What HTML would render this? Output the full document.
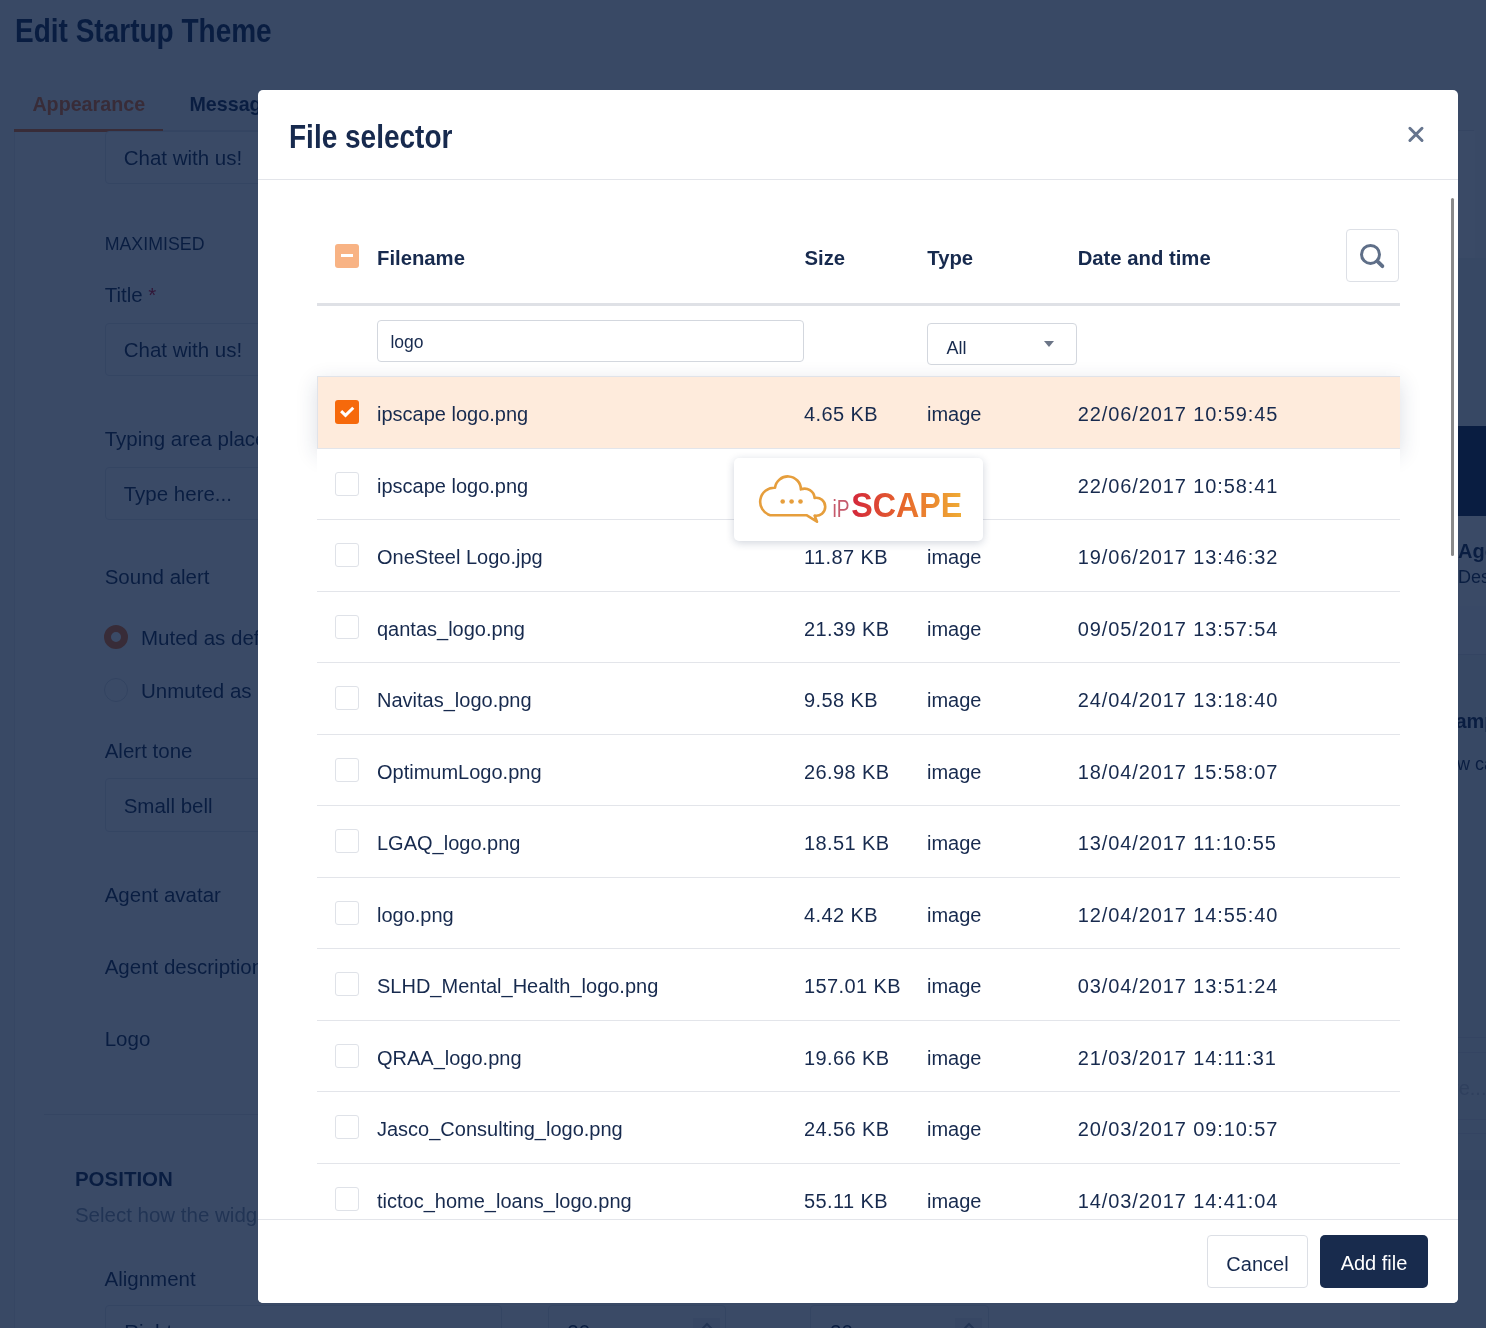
<!DOCTYPE html>
<html>
<head>
<meta charset="utf-8">
<style>
html,body{margin:0;padding:0;}
body{width:1486px;height:1328px;overflow:hidden;position:relative;background:#fff;font-family:"Liberation Sans",sans-serif;color:#0d2147;}
.a{position:absolute;white-space:nowrap;line-height:1;}
#bgpage{will-change:transform;position:absolute;left:0;top:0;width:1486px;height:1328px;background:#f7f8fa;overflow:hidden;}
#overlay{position:absolute;left:0;top:0;width:1486px;height:1328px;background:rgba(9,29,64,0.8);}
#modal{will-change:transform;position:absolute;left:258px;top:90px;width:1200px;height:1213px;background:#fff;border-radius:5px;overflow:hidden;color:#172a4e;}

#body{position:absolute;left:0;top:90px;width:1200px;height:1039px;top:0;}
.cbh{position:absolute;left:77px;top:154px;width:24px;height:24px;background:#f8b384;border-radius:3px;}
.hd{top:157.6px;font-size:20.3px;font-weight:bold;}
.row{position:absolute;left:59px;width:1083px;height:71.5px;box-sizing:border-box;border-bottom:1px solid #e3e5ea;background:#fff;}
.row.sel{background:#feebdc;box-shadow:inset 1px 1px 0 #e0e3e9,0 6px 20px rgba(30,50,90,0.16);}
.cb{position:absolute;left:18px;top:23px;width:22px;height:22px;border:1px solid #dfe2e8;border-radius:3px;background:#fff;}
.cb.on{top:24px;width:24px;height:24px;border:0;background:#f6690b;}
.cb svg{position:absolute;left:0;top:0}
.t{position:absolute;top:27.1px;font-size:20px;line-height:1;white-space:nowrap;}
.sel .t{top:27.8px}.c1{left:60px}.c2{left:487px;letter-spacing:0.4px}.c3{left:610px}.c4{left:760.7px;letter-spacing:0.9px}
#tip{position:absolute;left:476px;top:368px;width:249px;height:83px;background:#fff;border-radius:5px;box-shadow:0 2px 9px rgba(20,40,80,0.2);z-index:5;}
#foot{position:absolute;left:0;top:1129px;width:1200px;height:84px;background:#fff;z-index:10;}
.btn{top:16px;height:51px;border-radius:4px;font-size:20px;line-height:56px;text-align:center;}
</style>
</head>
<body>
<div id="bgpage">
<div class="a" style="left:14px;top:131px;width:1460px;height:1300px;background:#fff;border-left:1px solid #e9ebef"></div>
<div class="a" style="left:15px;top:19px;font-size:28px;font-weight:bold;transform:scaleY(1.17);transform-origin:0 23.7px">Edit Startup Theme</div>
<div class="a" style="left:14px;top:130px;width:1460px;height:1px;background:#e3e6eb"></div>
<div class="a" style="left:32.4px;top:95.32px;font-size:19.7px;font-weight:bold;color:#f26b1d">Appearance</div>
<div class="a" style="left:189.4px;top:95.32px;font-size:19.7px;font-weight:bold">Messages</div>
<div class="a" style="left:14px;top:129px;width:149px;height:3px;background:#f26b1d"></div>
<div class="a" style="left:104.5px;top:131px;width:600px;height:53px;box-sizing:border-box;border:1px solid #dfe3ea;border-radius:4px;"></div>
<div class="a" style="left:123.7px;top:147.85px;font-size:20.5px;">Chat with us!</div>
<div class="a" style="left:104.7px;top:235.73px;font-size:17.8px;">MAXIMISED</div>
<div class="a" style="left:104.7px;top:285.35px;font-size:20.5px;">Title <span style="color:#d0021b">*</span></div>
<div class="a" style="left:104.5px;top:322.8px;width:600px;height:53px;box-sizing:border-box;border:1px solid #dfe3ea;border-radius:4px;"></div>
<div class="a" style="left:123.7px;top:339.65px;font-size:20.5px;">Chat with us!</div>
<div class="a" style="left:104.7px;top:429.45px;font-size:20.5px;">Typing area placeholder</div>
<div class="a" style="left:104.5px;top:466.7px;width:600px;height:53px;box-sizing:border-box;border:1px solid #dfe3ea;border-radius:4px;"></div>
<div class="a" style="left:123.7px;top:483.85px;font-size:20.5px;">Type here...</div>
<div class="a" style="left:104.7px;top:567.45px;font-size:20.5px;">Sound alert</div>
<div class="a" style="left:104px;top:625px;width:24px;height:24px;box-sizing:border-box;border-radius:50%;border:7px solid #f26b1d;background:#fff"></div>
<div class="a" style="left:141px;top:628.45px;font-size:20.5px;">Muted as default</div>
<div class="a" style="left:104px;top:678px;width:24px;height:24px;box-sizing:border-box;border-radius:50%;border:1px solid #d6dae1;background:#fff"></div>
<div class="a" style="left:141px;top:680.65px;font-size:20.5px;">Unmuted as default</div>
<div class="a" style="left:104.7px;top:741.35px;font-size:20.5px;">Alert tone</div>
<div class="a" style="left:104.5px;top:778px;width:600px;height:54px;box-sizing:border-box;border:1px solid #dfe3ea;border-radius:4px;"></div>
<div class="a" style="left:123.7px;top:795.55px;font-size:20.5px;">Small bell</div>
<div class="a" style="left:104.7px;top:885.15px;font-size:20.5px;">Agent avatar</div>
<div class="a" style="left:104.7px;top:957.25px;font-size:20.5px;">Agent description</div>
<div class="a" style="left:104.7px;top:1029.15px;font-size:20.5px;">Logo</div>
<div class="a" style="left:44px;top:1114px;width:1400px;height:1px;background:#e3e6eb"></div>
<div class="a" style="left:74.9px;top:1168.55px;font-size:20.5px;font-weight:bold">POSITION</div>
<div class="a" style="left:74.9px;top:1205.25px;font-size:20.5px;color:#8390a6">Select how the widget appears on the page</div>
<div class="a" style="left:104.5px;top:1269.15px;font-size:20.5px;">Alignment</div>
<div class="a" style="left:104.5px;top:1305px;width:397px;height:52px;box-sizing:border-box;border:1px solid #dfe3ea;border-radius:4px;"></div>
<div class="a" style="left:547.6px;top:1305px;width:178.4px;height:52px;box-sizing:border-box;border:1px solid #dfe3ea;border-radius:4px;"></div>
<div class="a" style="left:693px;top:1318px;width:27px;height:22px;background:#eef0f4"></div>
<div class="a" style="left:810px;top:1305px;width:178.5px;height:52px;box-sizing:border-box;border:1px solid #dfe3ea;border-radius:4px;"></div>
<div class="a" style="left:955px;top:1318px;width:27px;height:22px;background:#eef0f4"></div>
<div class="a" style="left:124.3px;top:1321.8px;font-size:20.5px">Right</div><div class="a" style="left:567.3px;top:1321.8px;font-size:20.5px">20</div><div class="a" style="left:830px;top:1321.8px;font-size:20.5px">20</div><svg class="a" style="left:699px;top:1322px" width="16" height="10"><path d="M2 8 L8 2 L14 8" stroke="#8a94a6" stroke-width="2" fill="none"/></svg><svg class="a" style="left:961px;top:1322px" width="16" height="10"><path d="M2 8 L8 2 L14 8" stroke="#8a94a6" stroke-width="2" fill="none"/></svg>
<div class="a" style="left:1400px;top:258px;width:86px;height:1070px;background:#f1f2f5"></div>
<div class="a" style="left:1400px;top:426px;width:86px;height:90px;background:#0d2147"></div>
<div class="a" style="left:1400px;top:516px;width:86px;height:138px;background:#fff"></div>
<div class="a" style="left:1400px;top:606px;width:86px;height:48px;background:#fbfbfc"></div>
<div class="a" style="left:1400px;top:654px;width:86px;height:1px;background:#dfe2e8"></div>
<div class="a" style="left:1458px;top:540.67px;font-size:20px;font-weight:bold">Agent name</div>
<div class="a" style="left:1458px;top:567.76px;font-size:18px;">Description</div>
<div class="a" style="left:1431px;top:711.07px;font-size:20px;font-weight:bold">Example</div>
<div class="a" style="left:1434px;top:754.76px;font-size:18px;">How can we help?</div>
<div class="a" style="left:1400px;top:1037px;width:86px;height:1px;background:#dfe2e8"></div>
<div class="a" style="left:1400px;top:1052px;width:86px;height:1px;background:#dfe2e8"></div>
<div class="a" style="left:1452px;top:1078.07px;font-size:20px;color:#c5cad3">re...</div>
<div class="a" style="left:1400px;top:1119px;width:86px;height:1px;background:#dfe2e8"></div>
<div class="a" style="left:1400px;top:1133px;width:86px;height:1px;background:#dfe2e8"></div>
<div class="a" style="left:1400px;top:1170px;width:86px;height:30px;background:#e2e5ea"></div>
</div>
<div id="overlay"></div>
<div id="modal">
<div class="a" style="left:31px;top:34.9px;font-size:28px;font-weight:bold;transform:scaleY(1.2);transform-origin:0 23.7px">File selector</div>
<svg class="a" style="left:1140px;top:30px" width="36" height="30" viewBox="0 0 36 30"><path d="M11.9 8.3 L24 20.5 M24 8.3 L11.9 20.5" stroke="#66758e" stroke-width="3" stroke-linecap="round" fill="none"/></svg>
<div class="a" style="left:0;top:89px;width:1200px;height:1px;background:#e3e5ea"></div>
<div id="body">
<div class="cbh"><div style="position:absolute;left:6px;top:10.3px;width:12px;height:3.2px;background:#fff"></div></div>
<div class="a hd" style="left:119px">Filename</div>
<div class="a hd" style="left:546.5px">Size</div>
<div class="a hd" style="left:669.3px">Type</div>
<div class="a hd" style="left:819.7px">Date and time</div>
<div class="a" style="left:1088.2px;top:139.4px;width:51px;height:51px;border:1px solid #dde0e6;border-radius:4px;">
<svg width="51" height="51" viewBox="0 0 51 51" style="position:absolute;left:-1px;top:-1px"><circle cx="24.5" cy="25.4" r="9" stroke="#5f6f88" stroke-width="3" fill="none"/><path d="M31.3 32.2 L36.4 37.2" stroke="#5f6f88" stroke-width="3.8" stroke-linecap="round"/></svg>
</div>
<div class="a" style="left:59px;top:213px;width:1083px;height:3px;background:#dfe1e6"></div>
<div class="a" style="left:119px;top:230px;width:425px;height:40px;border:1px solid #d3d7de;border-radius:4px;"></div>
<div class="a" style="left:132.4px;top:244.2px;font-size:17.5px;">logo</div>
<div class="a" style="left:669px;top:233px;width:148px;height:40px;border:1px solid #d3d7de;border-radius:4px;"></div>
<div class="a" style="left:688.5px;top:248.8px;font-size:18px;">All</div>
<svg class="a" style="left:786px;top:251px" width="10" height="6" viewBox="0 0 10 6"><path d="M0 0 L10 0 L5 6 Z" fill="#6b7587"/></svg>
<div class="row sel" style="top:286px;height:72.5px"><div class="cb on"><svg width="24" height="24" viewBox="0 0 24 24"><path d="M7.2 12.2 L10.5 15.4 L17.2 8.8" fill="none" stroke="#fff" stroke-width="3" stroke-linecap="square"/></svg></div><div class="t c1">ipscape logo.png</div><div class="t c2">4.65 KB</div><div class="t c3">image</div><div class="t c4">22/06/2017 10:59:45</div></div>
<div class="row" style="top:358.5px"><div class="cb"></div><div class="t c1">ipscape logo.png</div><div class="t c2">4.65 KB</div><div class="t c3">image</div><div class="t c4">22/06/2017 10:58:41</div></div>
<div class="row" style="top:430.0px"><div class="cb"></div><div class="t c1">OneSteel Logo.jpg</div><div class="t c2">11.87 KB</div><div class="t c3">image</div><div class="t c4">19/06/2017 13:46:32</div></div>
<div class="row" style="top:501.5px"><div class="cb"></div><div class="t c1">qantas_logo.png</div><div class="t c2">21.39 KB</div><div class="t c3">image</div><div class="t c4">09/05/2017 13:57:54</div></div>
<div class="row" style="top:573.0px"><div class="cb"></div><div class="t c1">Navitas_logo.png</div><div class="t c2">9.58 KB</div><div class="t c3">image</div><div class="t c4">24/04/2017 13:18:40</div></div>
<div class="row" style="top:644.5px"><div class="cb"></div><div class="t c1">OptimumLogo.png</div><div class="t c2">26.98 KB</div><div class="t c3">image</div><div class="t c4">18/04/2017 15:58:07</div></div>
<div class="row" style="top:716.0px"><div class="cb"></div><div class="t c1">LGAQ_logo.png</div><div class="t c2">18.51 KB</div><div class="t c3">image</div><div class="t c4">13/04/2017 11:10:55</div></div>
<div class="row" style="top:787.5px"><div class="cb"></div><div class="t c1">logo.png</div><div class="t c2">4.42 KB</div><div class="t c3">image</div><div class="t c4">12/04/2017 14:55:40</div></div>
<div class="row" style="top:859.0px"><div class="cb"></div><div class="t c1">SLHD_Mental_Health_logo.png</div><div class="t c2">157.01 KB</div><div class="t c3">image</div><div class="t c4">03/04/2017 13:51:24</div></div>
<div class="row" style="top:930.5px"><div class="cb"></div><div class="t c1">QRAA_logo.png</div><div class="t c2">19.66 KB</div><div class="t c3">image</div><div class="t c4">21/03/2017 14:11:31</div></div>
<div class="row" style="top:1002.0px"><div class="cb"></div><div class="t c1">Jasco_Consulting_logo.png</div><div class="t c2">24.56 KB</div><div class="t c3">image</div><div class="t c4">20/03/2017 09:10:57</div></div>
<div class="row" style="top:1073.5px"><div class="cb"></div><div class="t c1">tictoc_home_loans_logo.png</div><div class="t c2">55.11 KB</div><div class="t c3">image</div><div class="t c4">14/03/2017 14:41:04</div></div>
<div class="a" style="left:1193px;top:108px;width:3px;height:357.5px;background:#8a8a8a;border-radius:2px"></div>
<div id="tip"><svg width="249" height="83" viewBox="0 0 249 83" style="position:absolute;left:0;top:0">
<defs><linearGradient id="g1" x1="117" y1="0" x2="228" y2="0" gradientUnits="userSpaceOnUse"><stop offset="0" stop-color="#d3253b"/><stop offset="0.5" stop-color="#e86c2c"/><stop offset="1" stop-color="#efac35"/></linearGradient></defs>
<path d="M36.2 57.2 L72.5 57.2 L83 63.7 L80.6 57.6 A9 9 0 1 0 80.6 39.9 A10 10 0 0 0 66.9 31.4 A13 13 0 0 0 41 29.8 A14 14 0 0 0 36.2 57.2 Z" fill="none" stroke="#e69e3c" stroke-width="2.6" stroke-linejoin="round"/>
<circle cx="48.7" cy="43.5" r="2.3" fill="#e69e3c"/><circle cx="57.6" cy="43.5" r="2.3" fill="#e69e3c"/><circle cx="66.5" cy="43.5" r="2.3" fill="#e69e3c"/>
<text x="98.6" y="58.6" font-family="Liberation Sans" font-size="23.5" fill="#c55a6c" textLength="17" lengthAdjust="spacingAndGlyphs">iP</text>
<text x="117.2" y="58.6" font-family="Liberation Sans" font-weight="bold" font-size="35" fill="url(#g1)" textLength="111" lengthAdjust="spacingAndGlyphs">SCAPE</text>
</svg></div>
</div>
<div id="foot">
<div class="a" style="left:0;top:0;width:1200px;height:1px;background:#e3e5ea"></div>
<div class="a btn" style="left:949px;width:99px;border:1px solid #dcdfe5;color:#172a4e">Cancel</div>
<div class="a btn" style="left:1062px;width:108px;height:53px;top:16px;background:#182b4d;color:#fff;border-radius:5px">Add file</div>
</div>
</div>
</body>
</html>
